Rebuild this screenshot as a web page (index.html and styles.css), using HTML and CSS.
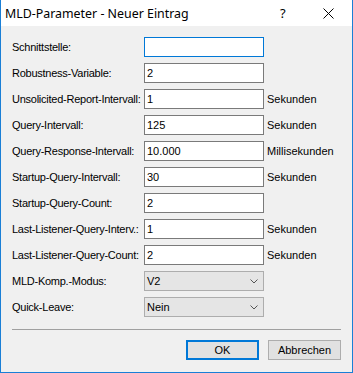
FILE: index.html
```html
<!DOCTYPE html>
<html lang="de">
<head>
<meta charset="utf-8">
<title>MLD-Parameter - Neuer Eintrag</title>
<link rel="stylesheet" href="styles.css">
</head>
<body>
<div class="window">
  <div class="titlebar">
    <span class="title">MLD-Parameter - Neuer Eintrag</span>
    <span class="help">?</span>
    <span class="close"><svg width="11" height="11" viewBox="0 0 11 11"><path d="M0.5 0.5 L10.5 10.5 M10.5 0.5 L0.5 10.5" stroke="#000" stroke-width="1" fill="none"/></svg></span>
  </div>
  <div class="content">
    <div class="form">
      <label class="lbl">Schnittstelle:</label><div class="input focused"></div><span class="unit"></span>
      <label class="lbl">Robustness-Variable:</label><div class="input">2</div><span class="unit"></span>
      <label class="lbl">Unsolicited-Report-Intervall:</label><div class="input">1</div><span class="unit">Sekunden</span>
      <label class="lbl">Query-Intervall:</label><div class="input">125</div><span class="unit">Sekunden</span>
      <label class="lbl">Query-Response-Intervall:</label><div class="input">10.000</div><span class="unit">Millisekunden</span>
      <label class="lbl">Startup-Query-Intervall:</label><div class="input">30</div><span class="unit">Sekunden</span>
      <label class="lbl">Startup-Query-Count:</label><div class="input">2</div><span class="unit"></span>
      <label class="lbl">Last-Listener-Query-Interv.:</label><div class="input">1</div><span class="unit">Sekunden</span>
      <label class="lbl">Last-Listener-Query-Count:</label><div class="input">2</div><span class="unit">Sekunden</span>
      <label class="lbl">MLD-Komp.-Modus:</label><div class="select"><span>V2</span><svg width="8" height="5" viewBox="0 0 8 5"><path d="M0.5 0.5 L4 4 L7.5 0.5" stroke="#555" stroke-width="1" fill="none"/></svg></div><span class="unit"></span>
      <label class="lbl">Quick-Leave:</label><div class="select"><span>Nein</span><svg width="8" height="5" viewBox="0 0 8 5"><path d="M0.5 0.5 L4 4 L7.5 0.5" stroke="#555" stroke-width="1" fill="none"/></svg></div><span class="unit"></span>
    </div>
    <div class="separator"></div>
    <div class="buttons">
      <div class="btn default">OK</div>
      <div class="btn">Abbrechen</div>
    </div>
  </div>
</div>
</body>
</html>
```
FILE: styles.css
```css
html, body {
  margin: 0;
  padding: 0;
  background: #f0f0f0;
}
.window {
  width: 351px;
  height: 372px;
  border: 1px solid #1a7fd6;
  border-top: none;
  background: #f0f0f0;
  display: flex;
  flex-direction: column;
  font-family: "Liberation Sans", Arial, sans-serif;
  font-size: 11px;
  color: #000;
}
.titlebar {
  height: 26px;
  background: #fff;
  display: flex;
  align-items: center;
  font-family: "Noto Sans", "Open Sans", sans-serif;
  font-size: 12.4px;
  flex-shrink: 0;
}
.title {
  margin-left: 4px;
  flex: 1;
}
.help {
  width: 12px;
  margin-right: 31px;
  font-size: 13px;
}
.close {
  display: flex;
  margin-right: 18px;
}
.content {
  padding: 11px 11px 0 11px;
  display: flex;
  flex-direction: column;
}
.form {
  display: grid;
  grid-template-columns: 132px 120px auto;
  grid-auto-rows: 20px;
  row-gap: 6px;
  align-items: center;
}
.lbl {
  line-height: 20px;
  white-space: nowrap;
  letter-spacing: -0.25px;
}
.input {
  box-sizing: border-box;
  height: 20px;
  border: 1px solid #7a7a7a;
  background: #fff;
  padding-left: 2px;
  line-height: 18px;
}
.input.focused {
  border-color: #0078d7;
}
.unit {
  margin-left: 3px;
  line-height: 20px;
}
.select {
  box-sizing: border-box;
  height: 20px;
  border: 1px solid #adadad;
  background: #e5e5e5;
  padding: 0 5px 0 2px;
  display: flex;
  align-items: center;
  justify-content: space-between;
}
.separator {
  height: 1px;
  background: #a0a0a0;
  margin-top: 12px;
  width: 329px;
}
.buttons {
  display: flex;
  justify-content: flex-end;
  gap: 9px;
  margin-top: 10px;
}
.btn {
  box-sizing: border-box;
  width: 73px;
  height: 20px;
  border: 1px solid #adadad;
  background: #e1e1e1;
  display: flex;
  align-items: center;
  justify-content: center;
}
.btn.default {
  border: 2px solid #0078d7;
}
```
